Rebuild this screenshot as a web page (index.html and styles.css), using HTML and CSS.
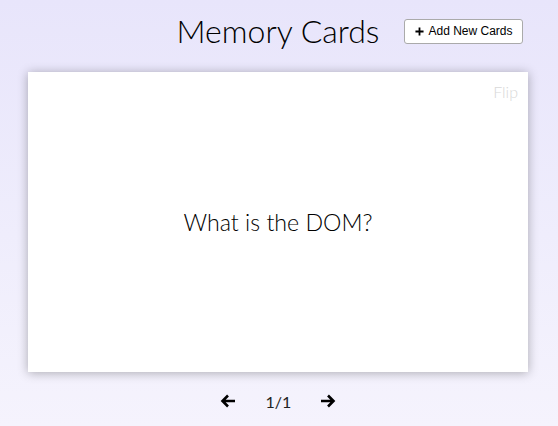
FILE: index.html
```html
<!DOCTYPE html>
<html lang="en">
<head>
<meta charset="UTF-8">
<title>Memory Cards</title>
<link rel="stylesheet" href="styles.css">
</head>
<body>
  <header class="header">
    <span class="spacer"></span>
    <h1 class="title">Memory Cards</h1>
    <div class="actions">
      <button class="btn btn-small"><svg class="plus" viewBox="0 0 10 10" width="9" height="9"><path d="M5 0.5v9M0.5 5h9" stroke="#000" stroke-width="2"/></svg>Add New Cards</button>
    </div>
  </header>
  <main class="cards">
    <div class="card">
      <p class="question">What is the DOM?</p>
      <span class="flip">Flip</span>
    </div>
  </main>
  <nav class="navigation">
    <button class="nav-button" aria-label="Previous"><svg viewBox="0 0 16 14" width="16" height="14"><path d="M15 7H2.5M8 1.5L2.5 7L8 12.5" fill="none" stroke="#000" stroke-width="2.6" stroke-linejoin="miter"/></svg></button>
    <p class="current">1/1</p>
    <button class="nav-button" aria-label="Next"><svg viewBox="0 0 16 14" width="16" height="14"><path d="M1 7H13.5M8 1.5L13.5 7L8 12.5" fill="none" stroke="#000" stroke-width="2.6" stroke-linejoin="miter"/></svg></button>
  </nav>
</body>
</html>
```

FILE: styles.css
```css
* { box-sizing: border-box; }

html, body {
  margin: 0;
  height: 100%;
}

body {
  height: 426px;
  overflow: hidden;
  padding-right: 2px;
  font-family: Lato, "Noto Sans", sans-serif;
  background: linear-gradient(180deg, #e8e5fb 0%, #efedfc 55%, #f5f3fd 100%);
  display: flex;
  flex-direction: column;
  align-items: center;
}

.header {
  width: 100%;
  display: grid;
  grid-template-columns: 1fr auto 1fr;
  align-items: center;
  padding-top: 12px;
  height: 72px;
  align-content: start;
}

.title {
  margin: 0;
  font-weight: 300;
  font-size: 32px;
  line-height: 38px;
  color: #000;
  text-align: center;
}

.actions {
  padding-left: 25px;
  display: flex;
  align-items: center;
}

.btn {
  cursor: pointer;
  background-color: #fff;
  border: 1px solid #aaa;
  border-radius: 3px;
  font-family: "Liberation Sans", Arial, sans-serif;
  color: #000;
}

.btn-small {
  font-size: 12px;
  padding: 5px 8px 5px 10px;
  height: 25px;
  width: 119px;
  display: flex;
  align-items: center;
  white-space: nowrap;
}

.plus {
  margin-right: 4px;
  flex: none;
}

.cards {
  width: 500px;
  height: 300px;
}

.card {
  position: relative;
  width: 100%;
  height: 100%;
  background: #fff;
  box-shadow: 0 1px 10px rgba(0, 0, 0, 0.3);
  display: flex;
  align-items: center;
  justify-content: center;
}

.question {
  margin: 0;
  font-size: 23.2px;
  font-weight: 300;
  color: #000;
}

.flip {
  position: absolute;
  top: 10px;
  right: 10px;
  font-size: 16px;
  color: #d8d8d8;
  font-weight: 300;
}

.navigation {
  display: flex;
  align-items: center;
  margin-top: 20px;
  height: 18px;
}

.nav-button {
  border: none;
  background: transparent;
  padding: 0;
  display: flex;
  align-items: center;
  cursor: pointer;
}

.current {
  margin: 0 29px 0 30px;
  font-size: 16px;
  font-weight: 400;
  color: #222;
}
```
